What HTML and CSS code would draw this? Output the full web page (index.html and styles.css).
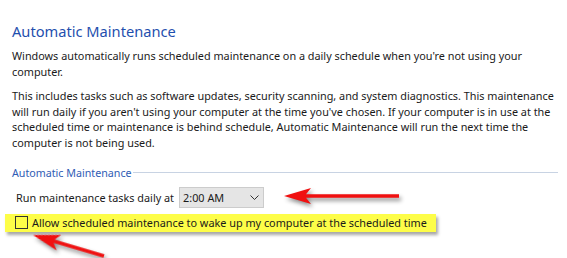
FILE: index.html
```html
<!DOCTYPE html>
<html lang="en">
<head>
    <meta charset="UTF-8">
    <meta name="viewport" content="width=device-width, initial-scale=1.0">
    <title>Automatic Maintenance</title>
    <link rel="stylesheet" href="styles.css">
</head>
<body>
    <div class="page">
        <h1 class="title">Automatic Maintenance</h1>

        <p class="text text-first">Windows automatically runs scheduled maintenance on a daily schedule when you're not using your computer.</p>

        <p class="text">This includes tasks such as software updates, security scanning, and system diagnostics. This maintenance will run daily if you aren't using your computer at the time you've chosen. If your computer is in use at the scheduled time or maintenance is behind schedule, Automatic Maintenance will run the next time the computer is not being used.</p>

        <div class="group">
            <div class="group-head"><span>Automatic Maintenance</span></div>

            <div class="run-row">
                <span>Run maintenance tasks daily at</span>
                <div class="select">
                    <span>2:00 AM</span>
                    <svg class="chevron" width="9" height="5" viewBox="0 0 9 5"><path d="M0.5 0.5 L4.5 4.5 L8.5 0.5" fill="none" stroke="#333" stroke-width="1"/></svg>
                </div>
            </div>

            <label class="wake">
                <span class="box"></span>
                <span>Allow scheduled maintenance to wake up my computer at the scheduled time</span>
            </label>
        </div>

        <!-- red arrows drawn on top of the screenshot -->
        <svg class="arrows" width="567" height="258" viewBox="0 0 567 258">
            <g class="arrow">
                <polygon points="284,196 311,188 306,194.3 399,194.3 399,197.8 306,197.8 311,204"/>
                <polygon transform="translate(33,235) rotate(16.5)" points="0,0 27,-8 22,-1.8 74,-1.8 74,1.8 22,1.8 27,8"/>
            </g>
        </svg>
    </div>
</body>
</html>
```

FILE: styles.css
```css
body {
    margin: 0;
    font-family: "Noto Sans", Arial, sans-serif;
    color: #1a1a1a;
    background: #fff;
}

.page {
    position: relative;
    width: 567px;
    height: 258px;
    box-sizing: border-box;
    padding: 20px 12px 0 12px;
    overflow: hidden;
}

.title {
    margin: 0;
    font-size: 14.65px;
    font-weight: normal;
    line-height: 22px;
    color: #1f4fae;
}

.text {
    margin: 9px 0 0;
    width: 543px;
    font-size: 10.85px;
    line-height: 15.5px;
}

.text-first {
    margin-top: 6px;
}

.group {
    margin-top: 16.3px;
}

.group-head {
    display: flex;
    align-items: center;
    gap: 1px;
    font-size: 10.7px;
    line-height: 15px;
    color: #2f5cb5;
}

.group-head::after {
    content: "";
    flex: 1;
    height: 1px;
    margin-right: -3px;
    margin-top: -3px;
    background: #c8d3e3;
}

.run-row {
    display: flex;
    align-items: center;
    gap: 5px;
    margin: 5.7px 0 0 4px;
    font-size: 10.85px;
}

.select {
    display: flex;
    align-items: center;
    justify-content: space-between;
    width: 85px;
    height: 21px;
    box-sizing: border-box;
    padding: 0 4px 0 3px;
    background: #e5e5e5;
    border: 1px solid #cccccc;
}

.chevron {
    margin-top: 1px;
}

.wake {
    display: flex;
    align-items: center;
    gap: 4px;
    width: fit-content;
    height: 18px;
    box-sizing: border-box;
    margin: 6px 0 0 -7px;
    padding: 0 9px 0 10px;
    font-size: 10.85px;
    background: #fdfd48;
    box-shadow: 2px 3px 3px rgba(0, 0, 0, 0.35);
}

.box {
    width: 13px;
    height: 13px;
    box-sizing: border-box;
    border: 1px solid #333;
    background: #fdfd48;
}

.arrows {
    position: absolute;
    top: 0;
    left: 0;
    pointer-events: none;
}

.arrow {
    fill: #f01010;
    filter: drop-shadow(2px 3px 2px rgba(0, 0, 0, 0.45));
}
```
